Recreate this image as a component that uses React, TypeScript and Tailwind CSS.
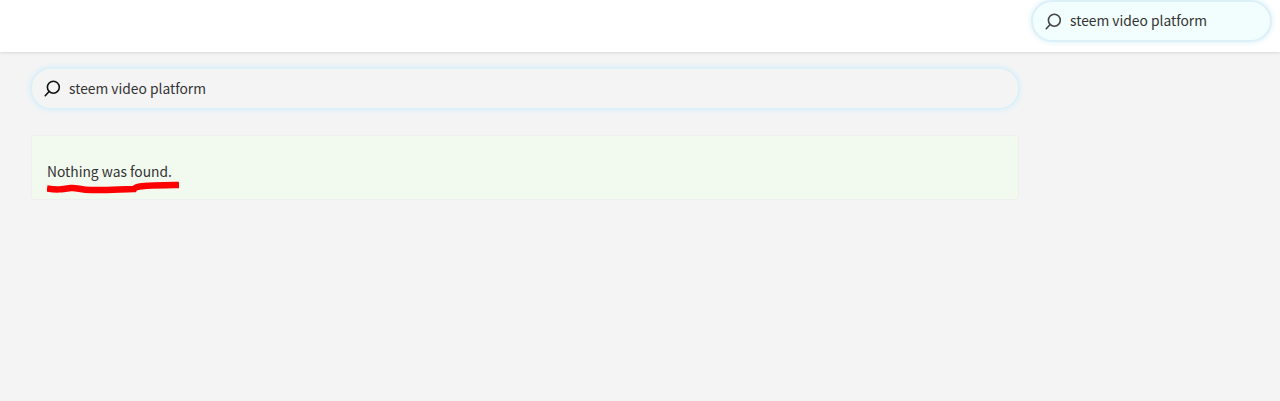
const SearchIcon = ({ className }: { className: string }) => (
  <svg viewBox="0 0 16 16" fill="none" stroke="currentColor" strokeWidth="1.5" className={className}>
    <circle cx="8.8" cy="6.8" r="5.6" />
    <path d="M4.8 10.8 L1.2 14.800" strokeLinecap="round" />
  </svg>
)

const SearchBox = ({ outer, bg, iconColor }: { outer: string; bg: string; iconColor: string }) => (
  <div className={`flex items-center rounded-[21px] border-2 border-[#dcf0f8] shadow-[0_0_6px_#d9eff8] pl-[12px] ${outer} ${bg}`}>
    <SearchIcon className={`w-[17px] h-[17px] ${iconColor}`} />
    <span className="ml-[8px] text-[13.8px] text-[#333] leading-none">steem video platform</span>
  </div>
)

export default function App() {
  return (
    <div className="w-[1280px] h-[401px] overflow-hidden bg-[#f4f4f4] font-['Noto_Sans_CJK_SC','Liberation_Sans',sans-serif]">
      <header className="h-[52px] bg-white shadow-[0_1px_3px_rgba(0,0,0,0.12)] flex justify-end items-start pr-[8px]">
        <SearchBox outer="w-[241px] h-[42px]" bg="bg-[#f2fdfd]" iconColor="text-[#444]" />
      </header>
      <main className="pl-[30px] pt-[15px] w-[1020px]">
        <SearchBox outer="w-[990px] h-[43px]" bg="bg-[#f4f4f4]" iconColor="text-[#111]" />
        <div className="relative mt-[25px] ml-px w-[988px] h-[65px] rounded-[3px] border border-[#efefef] bg-[#f2faef] pl-[15px] pt-[24px]">
          <p className="text-[13.8px] leading-[22px] text-[#333]">Nothing was found.</p>
          <svg viewBox="0 0 134 14" className="absolute left-[15px] top-[44px] w-[134px] h-[14px]" fill="none">
            <path d="M0 8.500 C10 10 14 9.500 24 8 C30 7.500 34 10 44 10 C56 10.500 70 9.500 87 9 C89 5.500 100 5.500 132 5" stroke="#ff0000" strokeWidth="6.500" />
          </svg>
        </div>
      </main>
    </div>
  )
}
